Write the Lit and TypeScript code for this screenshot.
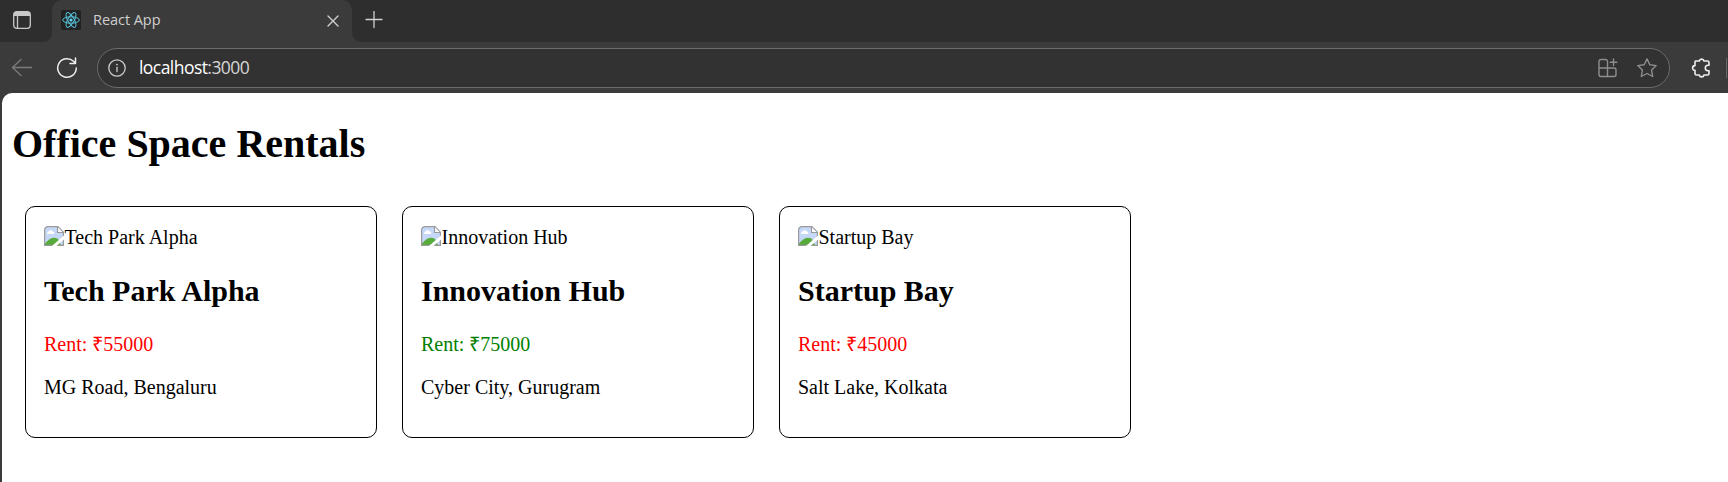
import { LitElement, html, css, svg } from "lit";
import { customElement, property } from "lit/decorators.js";

interface Office {
  name: string;
  rent: number;
  address: string;
}

const offices: Office[] = [
  { name: "Tech Park Alpha", rent: 55000, address: "MG Road, Bengaluru" },
  { name: "Innovation Hub", rent: 75000, address: "Cyber City, Gurugram" },
  { name: "Startup Bay", rent: 45000, address: "Salt Lake, Kolkata" },
];

@customElement("office-card")
class OfficeCard extends LitElement {
  @property({ attribute: false }) office!: Office;

  static styles = css`
    :host {
      display: block;
      box-sizing: border-box;
      width: 352px;
      height: 232px;
      border: 1px solid #000;
      border-radius: 10px;
      padding: 19px 18px;
    }
    .photo {
      display: flex;
      height: 23px;
      line-height: 23px;
    }
    .photo svg {
      display: block;
      flex: none;
      width: 20px;
      height: 20px;
    }
    .photo span {
      padding-left: 0.5px;
    }
    h2 {
      margin: 25px 0;
      font-size: 30px;
      line-height: 34px;
      font-weight: bold;
    }
    p {
      margin: 0 0 20px;
      line-height: 23px;
    }
    .low {
      color: #ff0000;
    }
    .high {
      color: #008000;
    }
  `;

  render() {
    const o = this.office;
    return html`
      <div class="photo">
        <svg viewBox="0 0 20 20">
          <defs>
            <clipPath id="frame"><path d="M4 0H14L20 6V20H0V4A4 4 0 0 1 4 0Z" /></clipPath>
          </defs>
          <g clip-path="url(#frame)">
            <rect width="20" height="20" fill="#c6d8f8" />
            <path d="M3 7.500a1.800 1.800 0 0 1 1.500-2 2.300 2.300 0 0 1 4.200 0A1.800 1.800 0 0 1 10 8H3.500z" fill="#fff" />
            <path d="M1 19V17.500Q8 9 14 13L17 19Z" fill="#56ab3a" />
            <path d="M4 .6H13.500L19.400 6.500V20M.6 20V4A3.400 3.400 0 0 1 4 .6M0 19.400H20" fill="none" stroke="#999" stroke-width="1.200" />
            <path d="M13.500 0V6.500H20Z" fill="#fff" stroke="#999" stroke-width="1.100" />
            <path d="M8.500 21.500L21 10.500" stroke="#fff" stroke-width="3" />
          </g>
        </svg>
        <span>${o.name}</span>
      </div>
      <h2>${o.name}</h2>
      <p class=${o.rent < 60000 ? "low" : "high"}>Rent: ₹${o.rent}</p>
      <p>${o.address}</p>
    `;
  }
}

const stroke = (d: string, width = 1.3) =>
  svg`<path d=${d} fill="none" stroke="currentColor" stroke-width=${width} stroke-linecap="round" stroke-linejoin="round" />`;

@customElement("app-root")
class AppRoot extends LitElement {
  static styles = css`
    :host {
      display: flex;
      flex-direction: column;
      height: 482px;
      overflow: hidden;
      background: #3b3b3b;
      font-family: "Liberation Serif", "Times New Roman", serif;
      font-size: 20px;
      color: #000;
    }
    svg {
      display: block;
      flex: none;
    }
    .tabs {
      display: flex;
      height: 42px;
      flex: none;
      font-family: "Open Sans", "Noto Sans", sans-serif;
      background: #3b3b3b;
    }
    .lead {
      box-sizing: border-box;
      width: 52px;
      padding: 11px 0 0 13px;
      background: #2e2e2e;
      border-bottom-right-radius: 9px;
      color: #c8c8c8;
    }
    .tabwrap {
      background: linear-gradient(#2e2e2e 20px, #3b3b3b 20px);
    }
    .tab {
      display: flex;
      box-sizing: border-box;
      width: 300px;
      padding: 10px 13px 0 9px;
      border-radius: 10px 10px 0 0;
      background: #3b3b3b;
      color: #cfcfcf;
    }
    .title {
      flex: 1;
      padding-left: 12px;
      font-size: 14.5px;
      line-height: 19px;
      letter-spacing: -0.05px;
    }
    .close {
      margin-top: 5px;
    }
    .rest {
      flex: 1;
      padding: 11px 0 0 13px;
      background: #2e2e2e;
      border-bottom-left-radius: 9px;
      color: #d0d0d0;
    }
    .bar {
      display: flex;
      align-items: center;
      box-sizing: border-box;
      height: 51px;
      flex: none;
      padding: 1px 0 0 11px;
      color: #eee;
    }
    .back {
      color: #7b7b7b;
    }
    .reload {
      margin-left: 23px;
    }
    .address {
      display: flex;
      align-items: center;
      box-sizing: border-box;
      width: 1573px;
      height: 40px;
      margin-left: 19px;
      padding: 0 12px 0 10px;
      border: 1px solid #6b6b6b;
      border-radius: 20px;
      background: #323232;
      color: #ccc;
    }
    .url {
      flex: 1;
      padding: 0 0 2px 13px;
      font-family: "Open Sans", "Noto Sans", sans-serif;
      font-size: 17.5px;
      line-height: 24px;
      letter-spacing: -0.55px;
      color: #d6d6d6;
    }
    .host {
      color: #fff;
    }
    .apps,
    .star {
      color: #8e8e8e;
    }
    .star {
      margin-left: 19px;
    }
    .puzzle {
      margin-left: 21px;
    }
    .divider {
      width: 1px;
      height: 20px;
      margin-left: 15px;
      background: #666;
    }
    .page {
      flex: 1;
      margin-left: 2px;
      padding: 28px 10px 0;
      background: #fff;
      border-top-left-radius: 10px;
    }
    h1 {
      margin: 0;
      font-size: 40px;
      line-height: 46px;
      font-weight: bold;
    }
    .cards {
      display: flex;
      gap: 25px;
      padding: 39px 13px 0;
    }
  `;

  render() {
    return html`
      <div class="tabs">
        <div class="lead">
          <svg width="18" height="18" viewBox="0 0 18 18">
            <rect x=".7" y=".7" width="16.600" height="16.600" rx="3" fill="none" stroke="currentColor" stroke-width="1.300" />
            <path d="M.7 5V3.500A3 3 0 0 1 3.700.7H14.300A3 3 0 0 1 17.300 3.500V5Z" fill="currentColor" />
            ${stroke("M4.500 5V17")}
          </svg>
        </div>
        <div class="tabwrap">
          <div class="tab">
            <svg width="20" height="20" viewBox="0 0 20 20">
              <rect width="20" height="20" rx="1.500" fill="#222" />
              <g fill="none" stroke="#58c4dc" stroke-width="1">
                <ellipse cx="10" cy="10" rx="8.300" ry="3.200" />
                <ellipse cx="10" cy="10" rx="8.300" ry="3.200" transform="rotate(60 10 10)" />
                <ellipse cx="10" cy="10" rx="8.300" ry="3.200" transform="rotate(120 10 10)" />
              </g>
              <circle cx="10" cy="10" r="1.600" fill="#61dafb" />
            </svg>
            <span class="title">React App</span>
            <svg class="close" width="12" height="12" viewBox="0 0 12 12">${stroke("M1 1L11 11M11 1L1 11", 1.4)}</svg>
          </div>
        </div>
        <div class="rest">
          <svg width="18" height="18" viewBox="0 0 18 18">${stroke("M9 .5V16.500M1 8.500H17")}</svg>
        </div>
      </div>
      <div class="bar">
        <svg class="back" width="22" height="20" viewBox="0 0 22 20">${stroke("M20.500 9.500H1.500M10 1.500L1.500 9.500L10 17.500")}</svg>
        <svg class="reload" width="22" height="22" viewBox="0 0 22 22">${stroke("M20.300 11A9.300 9.300 0 1 1 17.500 4.300L19.500 6.300M19.500 1V6.500H14", 1.5)}</svg>
        <div class="address">
          <svg width="18" height="18" viewBox="0 0 18 18">
            <circle cx="9" cy="9" r="8.200" fill="none" stroke="currentColor" stroke-width="1.300" />
            ${stroke("M9 8.300V12.500")}
            <circle cx="9" cy="5.600" r=".9" fill="currentColor" />
          </svg>
          <span class="url"><span class="host">localhost</span>:3000</span>
          <svg class="apps" width="20" height="20" viewBox="0 0 20 20">
            ${stroke("M9.500 10V3.500A2 2 0 0 0 7.500 1.500H3A2 2 0 0 0 1 3.500V16.500A2 2 0 0 0 3 18.500H16A2 2 0 0 0 18 16.500V12A2 2 0 0 0 16 10H1M9.500 10V18.500M15.500 1V7.500M12.200 4.300H18.800", 1.4)}
          </svg>
          <svg class="star" width="20" height="20" viewBox="0 0 20 20">
            ${stroke("M10 .9L12.800 6.700L19.200 7.600L14.600 12.100L15.700 18.500L10 15.500L4.300 18.500L5.400 12.100L.8 7.600L7.200 6.700Z", 1.4)}
          </svg>
        </div>
        <svg class="puzzle" width="20" height="20" viewBox="0 0 20 20">
          ${stroke("M4.500 3H8.300A2.400 2.400 0 0 1 13 3H16.500A1.500 1.500 0 0 1 18 4.500V7.300H17A2.600 2.600 0 0 0 17 12.700H18V15.500A1.500 1.500 0 0 1 16.500 17H13A2.400 2.400 0 0 1 8.300 17H5.500A1.500 1.500 0 0 1 4 15.500V12.400A2.400 2.400 0 0 1 4 7.600V3.500Z", 1.6)}
        </svg>
        <div class="divider"></div>
      </div>
      <main class="page">
        <h1>Office Space Rentals</h1>
        <div class="cards">${offices.map((o) => html`<office-card .office=${o}></office-card>`)}</div>
      </main>
    `;
  }
}
